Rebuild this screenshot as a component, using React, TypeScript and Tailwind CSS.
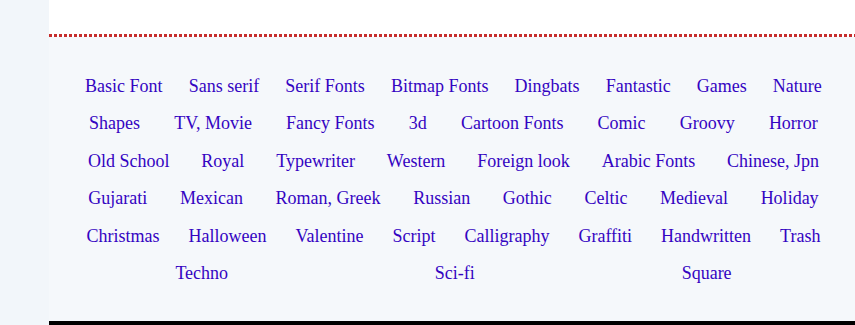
const ROWS = [
  ["Basic Font", "Sans serif", "Serif Fonts", "Bitmap Fonts", "Dingbats", "Fantastic", "Games", "Nature"],
  ["Shapes", "TV, Movie", "Fancy Fonts", "3d", "Cartoon Fonts", "Comic", "Groovy", "Horror"],
  ["Old School", "Royal", "Typewriter", "Western", "Foreign look", "Arabic Fonts", "Chinese, Jpn"],
  ["Gujarati", "Mexican", "Roman, Greek", "Russian", "Gothic", "Celtic", "Medieval", "Holiday"],
  ["Christmas", "Halloween", "Valentine", "Script", "Calligraphy", "Graffiti", "Handwritten", "Trash"],
  ["Techno", "Sci-fi", "Square"],
]

export default function App() {
  return (
    <div className="flex min-h-[325px] bg-[#f2f6fa] font-['Liberation_Serif',serif]">
      <div className="w-[49px] shrink-0" />
      <div className="flex flex-1 flex-col">
        <div className="h-[34px] bg-white" />
        <div className="h-[3px] bg-[repeating-linear-gradient(90deg,#c62d2d_0_3px,transparent_3px_5px)] bg-white" />
        <div className="flex flex-col bg-[#f5f8fb] pt-[30px] pb-[29px] pl-[23px] pr-[20px]">
          {ROWS.map((row, i) => (
            <div key={i} className="flex h-[37.5px] items-center justify-around">
              {row.map((name) => (
                <a key={name} href="#" className="text-[18px] leading-none text-[#3404c2]">
                  {name}
                </a>
              ))}
            </div>
          ))}
        </div>
        <div className="h-[6px] bg-black" />
      </div>
    </div>
  )
}
